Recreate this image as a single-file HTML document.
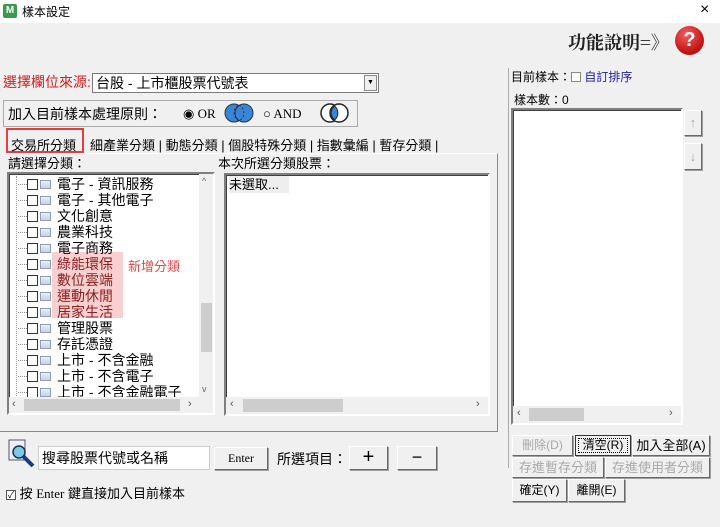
<!DOCTYPE html>
<html><head><meta charset="utf-8"><style>
*{margin:0;padding:0;box-sizing:border-box}
body{width:720px;height:527px;background:#f0f0f0;font-family:"Liberation Sans","Noto Sans CJK TC",sans-serif;font-size:13px;color:#000;position:relative;overflow:hidden}
.a{position:absolute;white-space:nowrap}
.btn{position:absolute;background:#f0f0f0;border:1px solid #fff;border-right-color:#696969;border-bottom-color:#696969;box-shadow:1px 1px 0 #a0a0a0;text-align:center;font-size:13px}
.sunk{position:absolute;background:#fff;border:2px solid;border-color:#808080 #fff #fff #808080;box-shadow:inset 1px 1px 0 #404040}
.row{position:absolute;left:18px;height:16px;font-size:14px;line-height:16px}
.cb{display:inline-block;width:11px;height:11px;border:1px solid #333;background:#fff;vertical-align:-1px;margin-right:2px}
.fi{display:inline-block;width:11px;height:9px;border:1px solid #8aa0b8;background:linear-gradient(#e8eef5,#c8d4e0);vertical-align:0;margin-right:6px}
.dot{display:inline-block;width:9px;border-top:1px dotted #888;vertical-align:4px}
.gr{color:#a8a8a8}
</style></head><body>
<div class="a" style="left:0;top:0;width:720px;height:23px;background:#fff"></div>
<div class="a" style="left:3px;top:4px;width:14px;height:14px;background:#3a9a4a;border-radius:2px;color:#fff;font-size:10px;line-height:14px;text-align:center;font-weight:bold">M</div>
<div class="a" style="left:22px;top:3px;font-size:12px">樣本設定</div>
<div class="a" style="left:700px;top:1px;font-size:16px">×</div>

<div class="a" style="left:568px;top:29px;font-size:18px;font-family:'Noto Serif CJK SC',serif;font-weight:bold;color:#222">功能說明=》</div>
<div class="a" style="left:675px;top:26px;width:29px;height:29px;border-radius:50%;background:radial-gradient(circle at 40% 30%,#f06060,#c01010 70%);color:#fff;font-weight:bold;font-size:20px;line-height:29px;text-align:center">?</div>

<div class="a" style="left:3px;top:72px;font-size:14px;color:#d02020">選擇欄位來源:</div>
<div class="a" style="left:92px;top:73px;width:287px;height:20px;background:#fff;border:1px solid #7a7a7a;font-size:14px;line-height:18px;padding-left:3px">台股 - 上市櫃股票代號表</div>
<div class="a" style="left:364px;top:75px;width:13px;height:16px;background:#f0f0f0;border:1px solid #888;font-size:7px;line-height:14px;text-align:center">▼</div>

<div class="a" style="left:3px;top:100px;width:355px;height:27px;border:1px solid #aaa"></div>
<div class="a" style="left:8px;top:104px;font-size:14px">加入目前樣本處理原則：</div>
<div class="a" style="left:183px;top:106px;font-size:13px;font-family:'Liberation Serif',serif">◉ OR</div>
<div class="a" style="left:224px;top:103px;width:30px;height:20px"><svg width="30" height="20"><circle cx="10" cy="10" r="9" fill="#3a85d8" stroke="#234" /><circle cx="20" cy="10" r="9" fill="#3a85d8" stroke="#234"/><path d="M15 2 A9 9 0 0 1 15 18 A9 9 0 0 1 15 2" fill="none" stroke="#234" stroke-dasharray="2 2"/></svg></div>
<div class="a" style="left:263px;top:106px;font-size:13px;font-family:'Liberation Serif',serif">○ AND</div>
<div class="a" style="left:319px;top:103px;width:31px;height:20px"><svg width="31" height="20"><circle cx="11" cy="10" r="9" fill="#fff" stroke="#222" stroke-width="1.5"/><circle cx="20" cy="10" r="9" fill="#fff" stroke="#222" stroke-width="1.5"/><path d="M15.5 3 A9 9 0 0 1 15.5 17 A9 9 0 0 1 15.5 3" fill="#3a85d8" stroke="#222"/></svg></div>

<div class="a" style="left:6px;top:128px;width:78px;height:25px;border:2px solid #e04040"></div>
<div class="a" style="left:11px;top:135px;font-size:13px">交易所分類</div>
<div class="a" style="left:90px;top:135px;font-size:13px">細產業分類 | 動態分類 | 個股特殊分類 | 指數彙編 | 暫存分類 |</div>

<div class="a" style="left:0;top:153px;width:498px;height:279px;border-right:1px solid #888;border-bottom:1px solid #888;border-top:1px solid #fff"></div>
<div class="a" style="left:8px;top:153px;font-size:13px">請選擇分類：</div>
<div class="a" style="left:218px;top:153px;font-size:13px">本次所選分類股票：</div>

<div class="sunk" style="left:7px;top:172px;width:208px;height:243px"></div>
<div class="a" style="left:52px;top:252px;width:71px;height:66px;background:#f8d0d0"></div>
<div class="a" style="left:16px;top:176px;height:220px;border-left:1px dotted #999"></div>
<div class="row" style="top:176px"><span class="dot"></span><span class="cb"></span><span class="fi"></span>電子 - 資訊服務</div>
<div class="row" style="top:192px"><span class="dot"></span><span class="cb"></span><span class="fi"></span>電子 - 其他電子</div>
<div class="row" style="top:208px"><span class="dot"></span><span class="cb"></span><span class="fi"></span>文化創意</div>
<div class="row" style="top:224px"><span class="dot"></span><span class="cb"></span><span class="fi"></span>農業科技</div>
<div class="row" style="top:240px"><span class="dot"></span><span class="cb"></span><span class="fi"></span>電子商務</div>
<div class="row" style="top:256px;color:#8a2020"><span class="dot"></span><span class="cb"></span><span class="fi"></span>綠能環保</div>
<div class="row" style="top:272px;color:#8a2020"><span class="dot"></span><span class="cb"></span><span class="fi"></span>數位雲端</div>
<div class="row" style="top:288px;color:#8a2020"><span class="dot"></span><span class="cb"></span><span class="fi"></span>運動休閒</div>
<div class="row" style="top:304px;color:#8a2020"><span class="dot"></span><span class="cb"></span><span class="fi"></span>居家生活</div>
<div class="row" style="top:320px"><span class="dot"></span><span class="cb"></span><span class="fi"></span>管理股票</div>
<div class="row" style="top:336px"><span class="dot"></span><span class="cb"></span><span class="fi"></span>存託憑證</div>
<div class="row" style="top:352px"><span class="dot"></span><span class="cb"></span><span class="fi"></span>上市 - 不含金融</div>
<div class="row" style="top:368px"><span class="dot"></span><span class="cb"></span><span class="fi"></span>上市 - 不含電子</div>
<div class="row" style="top:384px"><span class="dot"></span><span class="cb"></span><span class="fi"></span>上市 - 不含金融電子</div>
<div class="a" style="left:128px;top:256px;font-size:13px;color:#e04848">新增分類</div>
<div class="a" style="left:199px;top:174px;width:14px;height:223px;background:#f0f0f0"></div>
<div class="a" style="left:201px;top:303px;width:11px;height:49px;background:#cdcdcd"></div>
<div class="a" style="left:202px;top:176px;font-size:9px;color:#666">^</div>
<div class="a" style="left:202px;top:384px;font-size:9px;color:#666">v</div>
<div class="a" style="left:9px;top:397px;width:204px;height:16px;background:#f0f0f0"></div>
<div class="a" style="left:24px;top:399px;width:156px;height:12px;background:#cdcdcd"></div>
<div class="a" style="left:12px;top:398px;font-size:11px;color:#555">‹</div>
<div class="a" style="left:188px;top:398px;font-size:11px;color:#555">›</div>

<div class="sunk" style="left:224px;top:173px;width:266px;height:243px"></div>
<div class="a" style="left:229px;top:176px;width:60px;height:17px;background:#eee;font-size:13px;line-height:17px">未選取...</div>
<div class="a" style="left:226px;top:397px;width:262px;height:17px;background:#f0f0f0"></div>
<div class="a" style="left:243px;top:399px;width:100px;height:13px;background:#cdcdcd"></div>
<div class="a" style="left:230px;top:398px;font-size:11px;color:#555">‹</div>
<div class="a" style="left:476px;top:398px;font-size:11px;color:#555">›</div>

<div class="a" style="left:508px;top:68px;height:400px;border-left:1px solid #aaa"></div>
<div class="a" style="left:511px;top:68px;font-size:12px">目前樣本：<span style="display:inline-block;width:10px;height:10px;border:1px solid #888;background:#fff;vertical-align:-1px"></span> <span style="color:#2020a0">自訂排序</span></div>
<div class="a" style="left:514px;top:91px;font-size:12px">樣本數：0</div>
<div class="sunk" style="left:511px;top:108px;width:172px;height:317px"></div>
<div class="a" style="left:513px;top:406px;width:168px;height:17px;background:#f0f0f0"></div>
<div class="a" style="left:529px;top:408px;width:55px;height:13px;background:#cdcdcd"></div>
<div class="a" style="left:517px;top:407px;font-size:11px;color:#555">‹</div>
<div class="a" style="left:669px;top:407px;font-size:11px;color:#555">›</div>
<div class="btn" style="left:684px;top:110px;width:18px;height:26px;color:#aaa;line-height:24px">↑</div>
<div class="btn" style="left:684px;top:143px;width:18px;height:27px;color:#aaa;line-height:25px">↓</div>

<div class="btn gr" style="left:512px;top:435px;width:61px;height:21px;line-height:19px;font-size:12px">刪除(D)</div>
<div class="btn" style="left:575px;top:435px;width:56px;height:21px;line-height:19px;font-size:12px;border:1px solid #333;outline:1px dotted #000;outline-offset:-4px">清空(R)</div>
<div class="btn" style="left:632px;top:435px;width:78px;height:21px;line-height:19px;font-size:13px">加入全部(A)</div>
<div class="btn gr" style="left:512px;top:457px;width:92px;height:21px;line-height:19px">存進暫存分類</div>
<div class="btn gr" style="left:605px;top:457px;width:105px;height:21px;line-height:19px">存進使用者分類</div>
<div class="btn" style="left:512px;top:479px;width:55px;height:23px;line-height:21px;font-size:12px">確定(Y)</div>
<div class="btn" style="left:568px;top:479px;width:57px;height:23px;line-height:21px;font-size:12px">離開(E)</div>

<div class="a" style="left:6px;top:438px;width:30px;height:30px"><svg width="30" height="30"><rect x="3" y="2" width="16" height="20" fill="#eef" stroke="#556"/><circle cx="13" cy="14" r="6" fill="#7cc8e8" stroke="#234" stroke-width="1.5"/><path d="M17 18 L27 28" stroke="#1a3a80" stroke-width="4"/></svg></div>
<div class="a" style="left:38px;top:446px;width:172px;height:24px;background:#fff;border:1px solid #ccc;font-size:14px;line-height:22px;padding-left:3px">搜尋股票代號或名稱</div>
<div class="btn" style="left:214px;top:447px;width:54px;height:23px;line-height:21px;font-family:'Liberation Serif',serif;font-size:12px">Enter</div>
<div class="a" style="left:277px;top:449px;font-size:14px">所選項目：</div>
<div class="btn" style="left:349px;top:446px;width:39px;height:24px;line-height:20px;font-size:20px">+</div>
<div class="btn" style="left:397px;top:446px;width:40px;height:24px;line-height:20px;font-size:18px">−</div>
<div class="a" style="left:6px;top:483px;font-size:13px"><span style="display:inline-block;width:10px;height:10px;border:1px solid #555;background:#fff;font-size:9px;line-height:9px;text-align:center;vertical-align:0">✓</span> 按 <span style="font-family:'Liberation Serif',serif">Enter</span> 鍵直接加入目前樣本</div>
</body></html>
